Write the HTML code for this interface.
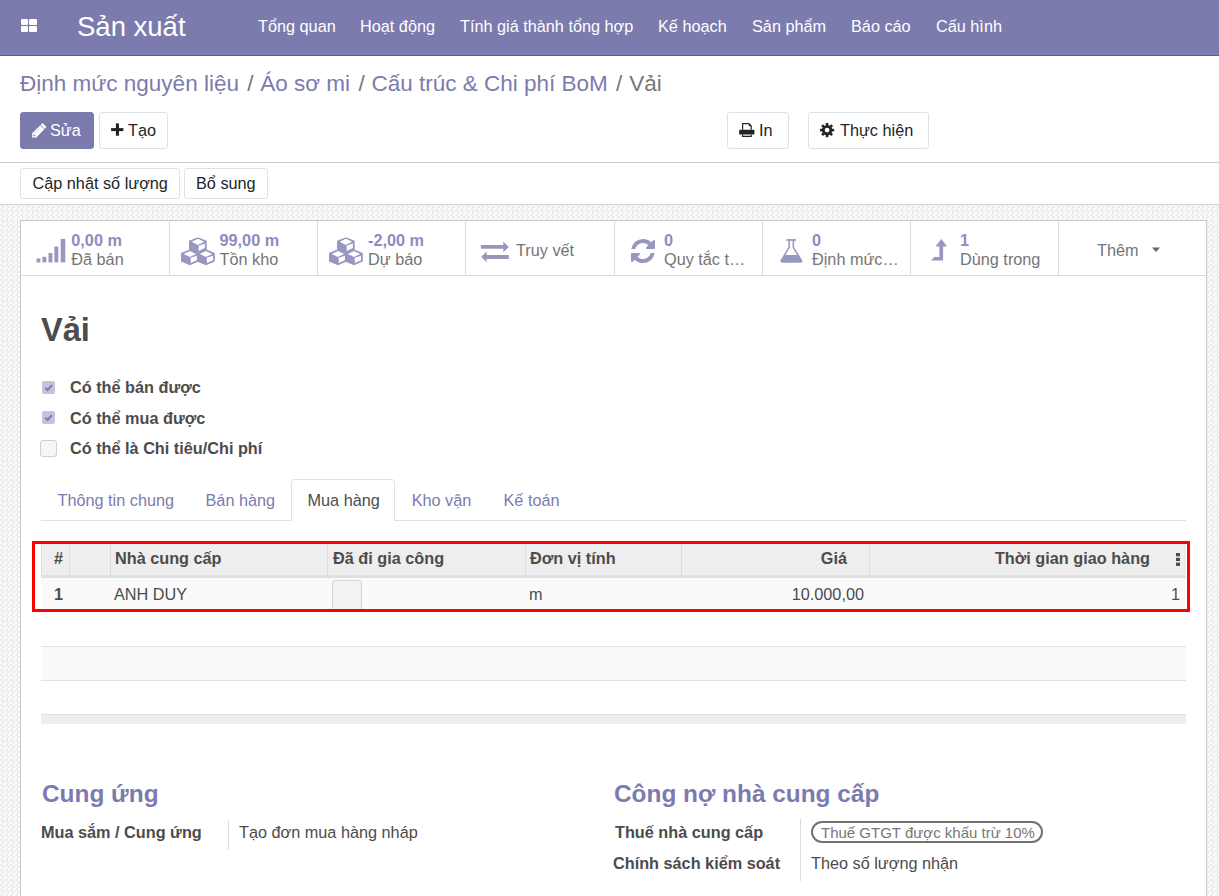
<!DOCTYPE html>
<html><head><meta charset="utf-8">
<style>
*{box-sizing:border-box;margin:0;padding:0}
html,body{width:1219px;height:896px;overflow:hidden;background:#fff}
body{font-family:"Liberation Sans",sans-serif;font-size:16.25px;color:#4c4c4c;position:relative}
.a{position:absolute;white-space:nowrap;line-height:1}
#nav{position:absolute;left:0;top:0;width:1219px;height:56px;background:#7c7bad;border-bottom:1px solid #5b5a92}
#nav .m{position:absolute;top:18px;color:#fff;font-size:16.25px;line-height:1}
.btn{position:absolute;border:1px solid #dee2e6;border-radius:3px;background:#fff;color:#212529;font-size:16.25px;line-height:1}
.btn span{position:absolute;white-space:nowrap}
#sheetbg{position:absolute;left:0;top:204px;width:1219px;height:692px;border-top:1px solid #d3d6dc;background:repeating-conic-gradient(#ececec 0 25%,#fbfbfb 0 50%) 0 1px/5px 5px}
#sheet{position:absolute;left:20px;top:220px;width:1187px;height:700px;background:#fff;border:1px solid #c8c8d6}
.sb{position:absolute;top:0;height:55px;width:149px;border-right:1px solid #d4d6e2}
.sv{position:absolute;font-weight:bold;color:#8d8cbf;line-height:1}
.sl{position:absolute;color:#757575;line-height:1;white-space:nowrap}
.ic{position:absolute}
</style></head><body>
<div id="nav">
  <svg class="ic" style="left:21px;top:19px" width="16" height="14" viewBox="0 0 16 14"><rect x="0" y="0" width="7" height="6" rx="1" fill="#fff"/><rect x="8" y="0" width="8" height="6" rx="1" fill="#fff"/><rect x="0" y="7" width="7" height="6" rx="1" fill="#fff"/><rect x="8" y="7" width="8" height="6" rx="1" fill="#fff"/></svg>
  <div class="a" style="left:77px;top:12.5px;color:#fff;font-size:27.5px">Sản xuất</div>
  <div class="m" style="left:258px">Tổng quan</div>
  <div class="m" style="left:360px">Hoạt động</div>
  <div class="m" style="left:460px">Tính giá thành tổng hợp</div>
  <div class="m" style="left:658px">Kế hoạch</div>
  <div class="m" style="left:752px">Sản phẩm</div>
  <div class="m" style="left:851px">Báo cáo</div>
  <div class="m" style="left:936px">Cấu hình</div>
</div>

<div class="a" style="left:20px;top:72.7px;font-size:22.5px;color:#7c7bad">Định mức nguyên liệu<span style="color:#777;padding:0 6.8px 0 8.3px">/</span>Áo sơ mi<span style="color:#777;padding:0 6.8px 0 8.3px">/</span>Cấu trúc &amp; Chi phí BoM<span style="color:#777;padding:0 6.8px 0 8.3px">/</span><span style="color:#777">Vải</span></div>

<div class="btn" style="left:20px;top:112px;width:74px;height:37px;background:#7c7bad;border-color:#7c7bad;color:#fff"><span style="left:29px;top:9px">Sửa</span></div>
<div class="btn" style="left:99px;top:112px;width:69px;height:37px"><span style="left:28px;top:9px">Tạo</span></div>
<div class="btn" style="left:727px;top:112px;width:62px;height:37px"><span style="left:31px;top:9px">In</span></div>
<div class="btn" style="left:808px;top:112px;width:121px;height:37px"><span style="left:31px;top:9px">Thực hiện</span></div>

<svg class="ic" style="left:26px;top:118px" width="30" height="24" viewBox="0 0 30 24"><path d="M6.2 19.4V15.3L16.6 5L20.5 8.9L10.3 19.4Z" fill="#fff"/><path d="M14.6 7.2L18.4 11" stroke="#7c7bad" stroke-width="0.9"/><path d="M8 16.3L13.6 10.7" stroke="#a9a8cc" stroke-width="0.6"/><path d="M7.6 16.8L8.8 18" stroke="#7c7bad" stroke-width="1.1"/></svg>
<svg class="ic" style="left:106px;top:118px" width="24" height="24" viewBox="0 0 24 24" fill="#212529"><rect x="9.9" y="5.4" width="3.1" height="12.3"/><rect x="5.1" y="10.1" width="12.3" height="3"/></svg>
<svg class="ic" style="left:734px;top:118px" width="26" height="24" viewBox="0 0 26 24"><path d="M8.6 11.8V5.7H15L17.2 7.9V11.8" fill="none" stroke="#212529" stroke-width="1.2"/><path d="M14.8 5.4V8.3H17.6" fill="#212529"/><rect x="5.2" y="11.8" width="15.2" height="4.8" rx="0.6" fill="#212529"/><path d="M8.6 16.6V18.3H17.2V16.6" fill="none" stroke="#212529" stroke-width="1.2"/></svg>
<svg class="ic" style="left:814px;top:118px" width="26" height="24" viewBox="0 0 26 24"><g transform="translate(13.1 12.1)" fill="#212529"><rect x="-1.3" y="-7.1" width="2.6" height="14.2"/><rect x="-1.3" y="-7.1" width="2.6" height="14.2" transform="rotate(45)"/><rect x="-1.3" y="-7.1" width="2.6" height="14.2" transform="rotate(90)"/><rect x="-1.3" y="-7.1" width="2.6" height="14.2" transform="rotate(135)"/><circle r="5.2"/><circle r="2.4" fill="#fff"/></g></svg>
<div style="position:absolute;left:0;top:162px;width:1219px;height:1px;background:#ccc"></div>
<div class="btn" style="left:20px;top:168px;width:160px;height:31px"><span style="left:11.5px;top:6px">Cập nhật số lượng</span></div>
<div class="btn" style="left:184px;top:168px;width:84px;height:31px"><span style="left:11px;top:6px">Bổ sung</span></div>

<div id="sheetbg"></div>
<div id="sheet"></div>
<!-- smart buttons -->
<div style="position:absolute;left:21px;top:275px;width:1185px;height:1px;background:#d6d9e1"></div>
<div style="position:absolute;left:169px;top:221px;width:1px;height:54px;background:#d6d9e1"></div>
<div style="position:absolute;left:317px;top:221px;width:1px;height:54px;background:#d6d9e1"></div>
<div style="position:absolute;left:465px;top:221px;width:1px;height:54px;background:#d6d9e1"></div>
<div style="position:absolute;left:614px;top:221px;width:1px;height:54px;background:#d6d9e1"></div>
<div style="position:absolute;left:762px;top:221px;width:1px;height:54px;background:#d6d9e1"></div>
<div style="position:absolute;left:910px;top:221px;width:1px;height:54px;background:#d6d9e1"></div>
<div style="position:absolute;left:1058px;top:221px;width:1px;height:54px;background:#d6d9e1"></div>

<svg class="ic" style="left:36px;top:237px" width="30" height="26" viewBox="0 0 30 26" fill="#9897c2"><rect x="0.5" y="21.4" width="3.9" height="4"/><rect x="6.4" y="19.8" width="3.9" height="5.6"/><rect x="12.5" y="16" width="3.9" height="9.4"/><rect x="18.4" y="9.6" width="3.9" height="15.8"/><rect x="24.7" y="2" width="4.6" height="23.4"/></svg>
<div class="sv" style="left:71.3px;top:231.7px">0,00 m</div>
<div class="sl" style="left:71.3px;top:250.8px">Đã bán</div>

<svg class="ic" style="left:176px;top:232px" width="44" height="36" viewBox="0 0 44 36"><g>
<g transform="translate(13,5.2)"><path d="M8.9 0L17.7 3.6V12.2L8.9 16L0 12.2V3.6Z" fill="#9897c2"/><path d="M8.9 1.6L15.1 4.6L8.9 7.7L2.7 4.6Z" fill="#fff"/><path d="M9.7 8.5L15.9 6.4V10.9L9.7 13.7Z" fill="#fff"/></g>
<g transform="translate(5,17.3)"><path d="M8.9 0L17.7 3.6V12.2L8.9 16L0 12.2V3.6Z" fill="#9897c2"/><path d="M8.9 1.6L15.1 4.6L8.9 7.7L2.7 4.6Z" fill="#fff"/><path d="M9.7 8.5L15.9 6.4V10.9L9.7 13.7Z" fill="#fff"/></g>
<g transform="translate(21.1,17.3)"><path d="M8.9 0L17.7 3.6V12.2L8.9 16L0 12.2V3.6Z" fill="#9897c2"/><path d="M8.9 1.6L15.1 4.6L8.9 7.7L2.7 4.6Z" fill="#fff"/><path d="M9.7 8.5L15.9 6.4V10.9L9.7 13.7Z" fill="#fff"/></g>
</g></svg>
<div class="sv" style="left:219.5px;top:231.7px">99,00 m</div>
<div class="sl" style="left:219.5px;top:250.8px">Tồn kho</div>

<svg class="ic" style="left:324px;top:232px" width="44" height="36" viewBox="0 0 44 36"><g>
<g transform="translate(13,5.2)"><path d="M8.9 0L17.7 3.6V12.2L8.9 16L0 12.2V3.6Z" fill="#9897c2"/><path d="M8.9 1.6L15.1 4.6L8.9 7.7L2.7 4.6Z" fill="#fff"/><path d="M9.7 8.5L15.9 6.4V10.9L9.7 13.7Z" fill="#fff"/></g>
<g transform="translate(5,17.3)"><path d="M8.9 0L17.7 3.6V12.2L8.9 16L0 12.2V3.6Z" fill="#9897c2"/><path d="M8.9 1.6L15.1 4.6L8.9 7.7L2.7 4.6Z" fill="#fff"/><path d="M9.7 8.5L15.9 6.4V10.9L9.7 13.7Z" fill="#fff"/></g>
<g transform="translate(21.1,17.3)"><path d="M8.9 0L17.7 3.6V12.2L8.9 16L0 12.2V3.6Z" fill="#9897c2"/><path d="M8.9 1.6L15.1 4.6L8.9 7.7L2.7 4.6Z" fill="#fff"/><path d="M9.7 8.5L15.9 6.4V10.9L9.7 13.7Z" fill="#fff"/></g>
</g></svg>
<div class="sv" style="left:368px;top:231.7px">-2,00 m</div>
<div class="sl" style="left:368px;top:250.8px">Dự báo</div>

<svg class="ic" style="left:476px;top:234px" width="40" height="34" viewBox="0 0 40 34" fill="#9897c2"><path d="M4.9 11H27.3V7.4L32.8 12.9L27.3 18.2V14.8H4.9Z"/><path d="M32.8 21.1H10.6V17.5L5.1 22.8L10.6 28.3V24.9H32.8Z"/></svg>
<div class="sl" style="left:516px;top:241.9px">Truy vết</div>

<svg class="ic" style="left:631px;top:239px" width="24" height="24" viewBox="0 0 1536 1536" fill="#9897c2" preserveAspectRatio="none"><path d="M1511 928q0 5-1 7-64 268-268 434.5t-478 166.5q-146 0-282.5-55t-243.5-157l-129 129q-19 19-45 19t-45-19-19-45v-448q0-26 19-45t45-19h448q26 0 45 19t19 45-19 45l-137 137q71 66 161 102t187 36q134 0 250-65t186-179q11-17 53-117 8-23 30-23h192q13 0 22.5 9.5t9.5 22.5zm25-800v448q0 26-19 45t-45 19h-448q-26 0-45-19t-19-45 19-45l138-138q-148-137-349-137-134 0-250 65t-186 179q-11 17-53 117-8 23-30 23h-199q-13 0-22.5-9.5t-9.5-22.5v-7q65-268 270-434.5t480-166.5q146 0 284 55.5t245 156.5l130-129q19-19 45-19t45 19 19 45z"/></svg>
<div class="sv" style="left:664px;top:231.7px">0</div>
<div class="sl" style="left:664px;top:250.8px">Quy tắc t…</div>

<svg class="ic" style="left:774px;top:234px" width="40" height="34" viewBox="0 0 40 34" fill="#9897c2"><rect x="12.5" y="5.1" width="9.5" height="1.8"/><path d="M14.4 6.8H15.9V13.6L11.5 20.9H23.0L18.6 13.6V6.8H20.1V13.2L28.2 26.2Q29 28.8 26.5 28.8H8.2Q5.7 28.8 6.5 26.2L14.4 13.2Z"/></svg>
<div class="sv" style="left:812px;top:231.7px">0</div>
<div class="sl" style="left:812px;top:250.8px">Định mức…</div>

<svg class="ic" style="left:920px;top:234px" width="40" height="34" viewBox="0 0 40 34" fill="#9897c2"><path d="M21.4 4.9L27.1 12.5H23.1V26.6H11.2L14.2 23H19.4V12.5H15.4Z"/></svg>
<div class="sv" style="left:960px;top:231.7px">1</div>
<div class="sl" style="left:960px;top:250.8px">Dùng trong</div>

<div class="sl" style="left:1097px;top:241.9px">Thêm</div>
<svg class="ic" style="left:1150px;top:246px" width="12" height="8" viewBox="0 0 12 8" fill="#666"><path d="M2 1.5H10L6 6Z"/></svg>

<!-- title -->
<div class="a" style="left:41px;top:313.5px;font-size:32.5px;font-weight:bold;color:#4c4c4c">Vải</div>

<!-- checkboxes -->
<svg class="ic" style="left:41px;top:380px" width="16" height="16" viewBox="0 0 16 16"><rect x="1" y="1" width="13" height="13" rx="2" fill="#c4c3de"/><path d="M4.2 7.6L6.6 10L11 5.2" stroke="#7c7bad" stroke-width="2" fill="none"/></svg>
<svg class="ic" style="left:41px;top:410px" width="16" height="16" viewBox="0 0 16 16"><rect x="1" y="1" width="13" height="13" rx="2" fill="#c4c3de"/><path d="M4.2 7.6L6.6 10L11 5.2" stroke="#7c7bad" stroke-width="2" fill="none"/></svg>
<div style="position:absolute;left:40px;top:440px;width:17px;height:17px;border:1px solid #cfcfcf;border-radius:3px;background:#f6f6f6"></div>
<div class="a" style="left:70px;top:379px;font-weight:bold">Có thể bán được</div>
<div class="a" style="left:70px;top:410px;font-weight:bold">Có thể mua được</div>
<div class="a" style="left:70px;top:439.7px;font-weight:bold">Có thể là Chi tiêu/Chi phí</div>

<!-- tabs -->
<div style="position:absolute;left:41px;top:520px;width:1145px;height:1px;background:#dee2e6"></div>
<div style="position:absolute;left:291px;top:479px;width:104px;height:42px;border:1px solid #dee2e6;border-bottom:none;border-radius:4px 4px 0 0;background:#fff"></div>
<div class="a" style="left:57.5px;top:491.6px;color:#7c7bad">Thông tin chung</div>
<div class="a" style="left:205.5px;top:491.6px;color:#7c7bad">Bán hàng</div>
<div class="a" style="left:307.5px;top:491.6px;color:#4c4c4c">Mua hàng</div>
<div class="a" style="left:411.7px;top:491.6px;color:#7c7bad">Kho vận</div>
<div class="a" style="left:503.5px;top:491.6px;color:#7c7bad">Kế toán</div>

<!-- table -->
<div style="position:absolute;left:41px;top:543px;width:1145px;height:32px;background:#eeeeee"></div>
<div style="position:absolute;left:41px;top:575px;width:1145px;height:3px;background:#dde0e5"></div>
<div style="position:absolute;left:41px;top:578px;width:1145px;height:33px;background:#fafafa"></div>
<div style="position:absolute;left:41px;top:646px;width:1145px;height:1px;background:#dee2e6"></div>
<div style="position:absolute;left:41px;top:647px;width:1145px;height:33px;background:#fafafa"></div>
<div style="position:absolute;left:41px;top:680px;width:1145px;height:1px;background:#dee2e6"></div>
<div style="position:absolute;left:41px;top:714px;width:1145px;height:1px;background:#dee2e6"></div>
<div style="position:absolute;left:41px;top:715px;width:1145px;height:9px;background:#eeeeee"></div>
<div style="position:absolute;left:41px;top:543px;width:1px;height:32px;background:#dcdcdc"></div>
<div style="position:absolute;left:69px;top:543px;width:1px;height:32px;background:#dcdcdc"></div>
<div style="position:absolute;left:110px;top:543px;width:1px;height:32px;background:#dcdcdc"></div>
<div style="position:absolute;left:327px;top:543px;width:1px;height:32px;background:#dcdcdc"></div>
<div style="position:absolute;left:525px;top:543px;width:1px;height:32px;background:#dcdcdc"></div>
<div style="position:absolute;left:681px;top:543px;width:1px;height:32px;background:#dcdcdc"></div>
<div style="position:absolute;left:869px;top:543px;width:1px;height:32px;background:#dcdcdc"></div>
<div class="a" style="left:54px;top:550.3px;font-weight:bold">#</div>
<div class="a" style="left:115px;top:550.3px;font-weight:bold">Nhà cung cấp</div>
<div class="a" style="left:333px;top:550.3px;font-weight:bold">Đã đi gia công</div>
<div class="a" style="left:530px;top:550.3px;font-weight:bold">Đơn vị tính</div>
<div class="a" style="left:799px;top:550.3px;font-weight:bold;width:48px;text-align:right">Giá</div>
<div class="a" style="left:900px;top:550.3px;font-weight:bold;width:250px;text-align:right">Thời gian giao hàng</div>
<svg class="ic" style="left:1176px;top:553px" width="4" height="13" viewBox="0 0 4 13" fill="#4c4c4c"><rect x="0" y="0" width="4" height="3.3"/><rect x="0" y="4.8" width="4" height="3.3"/><rect x="0" y="9.6" width="4" height="3.3"/></svg>
<div class="a" style="left:54px;top:585.8px;font-weight:bold">1</div>
<div class="a" style="left:114px;top:585.8px">ANH DUY</div>
<div style="position:absolute;left:332px;top:580px;width:30px;height:32px;border:1px solid #d4d4d4;border-radius:3px;background:#f3f3f3"></div>
<div class="a" style="left:529px;top:585.8px">m</div>
<div class="a" style="left:700px;top:585.8px;width:164px;text-align:right">10.000,00</div>
<div class="a" style="left:1100px;top:585.8px;width:80px;text-align:right">1</div>

<!-- red annotation -->
<div style="position:absolute;left:32px;top:541px;width:1158px;height:71px;border:3px solid #ff0000"></div>

<!-- groups -->
<div class="a" style="left:42px;top:781.5px;font-size:24.4px;font-weight:bold;color:#7c7bad">Cung ứng</div>
<div class="a" style="left:41px;top:823.5px;font-weight:bold">Mua sắm / Cung ứng</div>
<div style="position:absolute;left:228px;top:820px;width:1px;height:30px;background:#dcdcdc"></div>
<div class="a" style="left:239px;top:823.5px">Tạo đơn mua hàng nháp</div>

<div class="a" style="left:614px;top:781.5px;font-size:24.4px;font-weight:bold;color:#7c7bad">Công nợ nhà cung cấp</div>
<div class="a" style="left:615px;top:824px;font-weight:bold">Thuế nhà cung cấp</div>
<div class="a" style="left:613px;top:855px;font-weight:bold">Chính sách kiểm soát</div>
<div style="position:absolute;left:800px;top:819px;width:1px;height:62px;background:#dcdcdc"></div>
<div style="position:absolute;left:811px;top:821px;width:232px;height:22px;border:2px solid #727272;border-radius:11px"></div>
<div class="a" style="left:821px;top:824.8px;font-size:15px;color:#777">Thuế GTGT được khấu trừ 10%</div>
<div class="a" style="left:811px;top:855px">Theo số lượng nhận</div>
</body></html>
